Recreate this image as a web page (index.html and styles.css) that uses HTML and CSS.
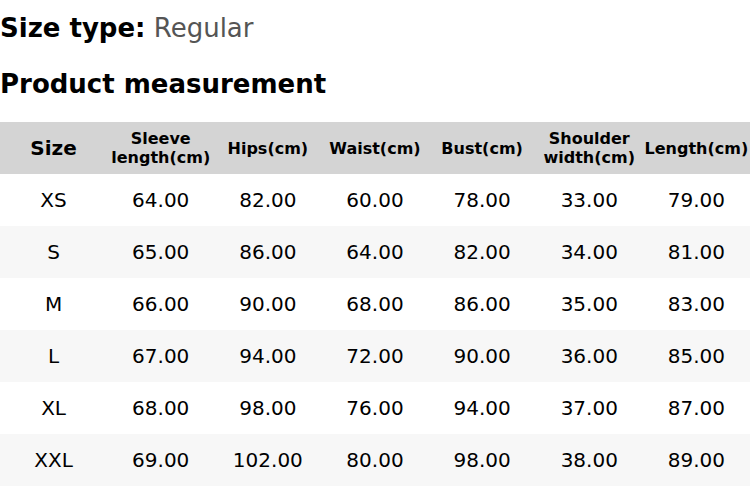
FILE: index.html
```html
<!DOCTYPE html>
<html>
<head>
<meta charset="utf-8">
<link rel="stylesheet" href="styles.css">
</head>
<body>
<div class="page">
  <div class="size-type"><span class="label">Size type:</span> <span class="value">Regular</span></div>
  <div class="title">Product measurement</div>
  <table class="chart">
    <thead>
      <tr>
        <th class="first">Size</th>
        <th>Sleeve length(cm)</th>
        <th>Hips(cm)</th>
        <th>Waist(cm)</th>
        <th>Bust(cm)</th>
        <th>Shoulder width(cm)</th>
        <th>Length(cm)</th>
      </tr>
    </thead>
    <tbody>
      <tr><td>XS</td><td>64.00</td><td>82.00</td><td>60.00</td><td>78.00</td><td>33.00</td><td>79.00</td></tr>
      <tr><td>S</td><td>65.00</td><td>86.00</td><td>64.00</td><td>82.00</td><td>34.00</td><td>81.00</td></tr>
      <tr><td>M</td><td>66.00</td><td>90.00</td><td>68.00</td><td>86.00</td><td>35.00</td><td>83.00</td></tr>
      <tr><td>L</td><td>67.00</td><td>94.00</td><td>72.00</td><td>90.00</td><td>36.00</td><td>85.00</td></tr>
      <tr><td>XL</td><td>68.00</td><td>98.00</td><td>76.00</td><td>94.00</td><td>37.00</td><td>87.00</td></tr>
      <tr><td>XXL</td><td>69.00</td><td>102.00</td><td>80.00</td><td>98.00</td><td>38.00</td><td>89.00</td></tr>
    </tbody>
  </table>
</div>
</body>
</html>
```
FILE: styles.css
```css
html, body {
  margin: 0;
  padding: 0;
  background: #fff;
}
body {
  font-family: "DejaVu Sans", sans-serif;
  color: #000;
}
.page {
  width: 750px;
  padding-top: 13px;
}
.size-type {
  font-size: 26px;
  line-height: 30px;
}
.size-type .label {
  font-weight: bold;
}
.size-type .value {
  color: #555;
}
.title {
  font-size: 26px;
  line-height: 30px;
  font-weight: bold;
  margin-top: 26px;
  margin-bottom: 23px;
}
.chart {
  width: 750px;
  border-collapse: collapse;
  table-layout: fixed;
}
.chart th {
  background: #d4d4d4;
  font-size: 16px;
  line-height: 19px;
  font-weight: bold;
  height: 52px;
  padding: 0;
  text-align: center;
  vertical-align: middle;
}
.chart th.first {
  font-size: 20px;
}
.chart td {
  font-size: 20px;
  height: 52px;
  padding: 0;
  text-align: center;
  vertical-align: middle;
}
.chart tbody tr:nth-child(even) td {
  background: #f7f7f7;
}
```
